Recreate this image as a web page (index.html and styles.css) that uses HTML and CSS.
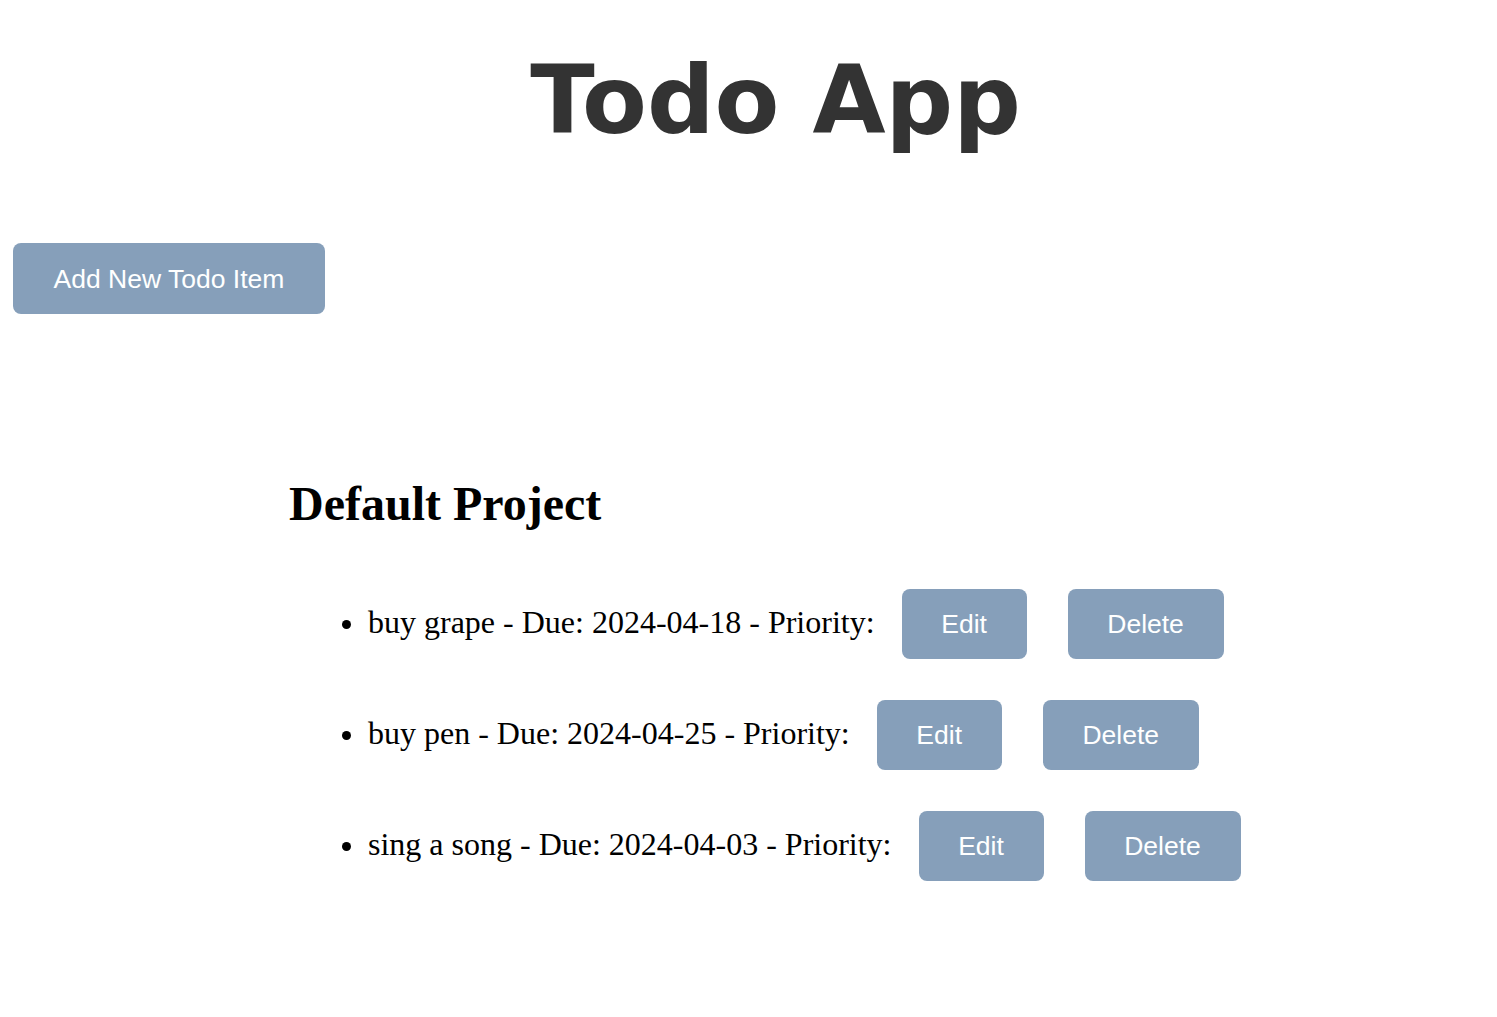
FILE: index.html
```html
<!DOCTYPE html>
<html>
<head>
<meta charset="utf-8">
<title>Todo App</title>
<link rel="stylesheet" href="styles.css">
</head>
<body>
<div class="app">
  <header class="header">
    <h1 class="title">Todo App</h1>
  </header>
  <div class="toolbar">
    <button class="btn btn-add">Add New Todo Item</button>
  </div>
  <section class="project">
    <h2 class="project-title">Default Project</h2>
    <ul class="todo-list">
      <li class="todo-item"><span class="todo-text">buy grape - Due: 2024-04-18 - Priority:</span><button class="btn btn-edit">Edit</button><button class="btn btn-delete">Delete</button></li>
      <li class="todo-item"><span class="todo-text">buy pen - Due: 2024-04-25 - Priority:</span><button class="btn btn-edit">Edit</button><button class="btn btn-delete">Delete</button></li>
      <li class="todo-item"><span class="todo-text">sing a song - Due: 2024-04-03 - Priority:</span><button class="btn btn-edit">Edit</button><button class="btn btn-delete">Delete</button></li>
    </ul>
  </section>
</div>
</body>
</html>
```
FILE: styles.css
```css
html, body {
  margin: 0;
  padding: 0;
  background: #ffffff;
}

body {
  font-family: "Liberation Serif", "Times New Roman", serif;
  font-size: 32px;
  color: #000;
}

.app {
  display: flex;
  flex-direction: column;
  padding: 0 13px;
}

.header {
  padding-top: 45px;
  padding-left: 54px;
  text-align: center;
}

.title {
  margin: 0;
  font-family: "DejaVu Sans", Verdana, sans-serif;
  font-weight: bold;
  font-size: 94.5px;
  line-height: 110px;
  color: #333333;
}

.toolbar {
  display: flex;
  margin-top: 88px;
}

.btn {
  font-family: "Liberation Sans", Arial, sans-serif;
  font-size: 26.5px;
  line-height: 30px;
  color: #ffffff;
  background: #869fba;
  border: none;
  border-radius: 8px;
  padding: 0;
  cursor: pointer;
}

.btn-add {
  width: 312px;
  height: 71px;
}

.project {
  margin-top: 162px;
  padding-left: 276px;
}

.project-title {
  margin: 0;
  font-size: 48px;
  font-weight: bold;
  line-height: 55px;
}

.todo-list {
  list-style: none;
  margin: 58px 0 0 0;
  padding-left: 53px;
  display: flex;
  flex-direction: column;
  gap: 41px;
}

.todo-item {
  display: flex;
  align-items: baseline;
}

.todo-item::before {
  content: "";
  align-self: center;
  width: 9px;
  height: 9px;
  border-radius: 50%;
  background: #000;
  margin-right: 17px;
}

.btn-edit {
  margin-left: 27px;
  width: 125px;
  height: 70px;
}

.btn-delete {
  margin-left: 41px;
  width: 156px;
  height: 70px;
}
```
